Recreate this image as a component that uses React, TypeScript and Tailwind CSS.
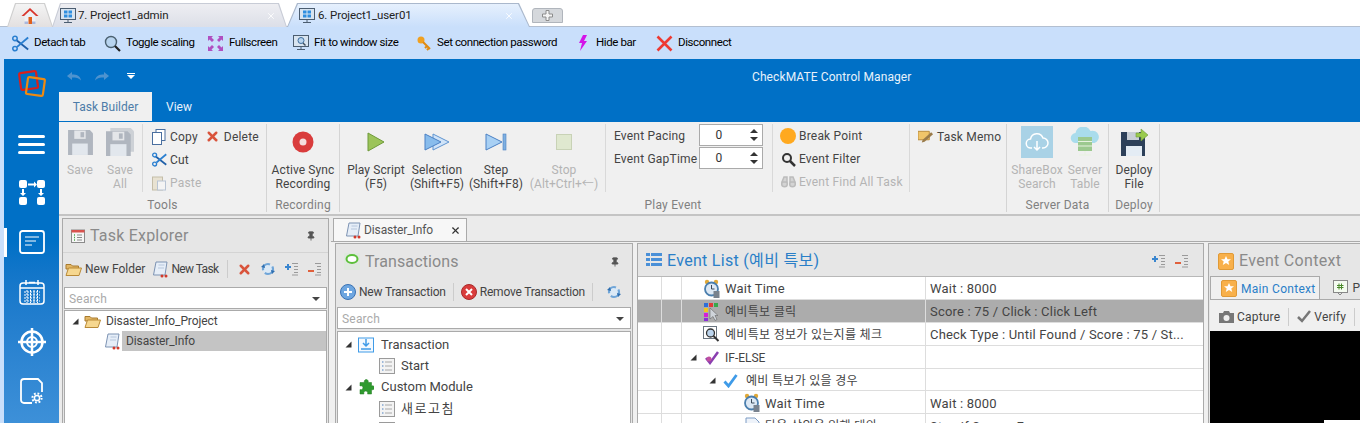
import React from 'react';
import { X, Pin } from 'lucide-react';

const Caret = () => (
  <svg width="7" height="7" viewBox="0 0 7 7" className="shrink-0"><path d="M6.5 0.5V6.5H0.5Z" fill="#333" /></svg>
);

const Scissors = ({ size = 20 }: { size?: number }) => (
  <svg width={size} height={size} viewBox="0 0 20 20" fill="none">
    <path d="M5 6L19 17" stroke="#1f5fa8" strokeWidth="2.200" />
    <path d="M19 3L6 14" stroke="#2a7fd0" strokeWidth="2.200" />
    <circle cx="3.500" cy="4" r="2.600" stroke="#2a7fd0" strokeWidth="1.800" />
    <circle cx="3.500" cy="16" r="2.600" stroke="#2a7fd0" strokeWidth="1.800" />
  </svg>
);

const Monitor = ({ win = false }: { win?: boolean }) => (
  <svg width="16" height="16" viewBox="0 0 16 16" fill="none" className="shrink-0">
    <rect x="0.500" y="0.500" width="15" height="11" fill="#d8e4f0" stroke="#4b5d70" />
    {win ? (
      <g fill="#2f8fe0"><rect x="4" y="2.500" width="3.500" height="3" /><rect x="8.500" y="2.500" width="3.500" height="3" /><rect x="4" y="6.500" width="3.500" height="3" /><rect x="8.500" y="6.500" width="3.500" height="3" /></g>
    ) : (
      <g><circle cx="8" cy="5.500" r="3" fill="#b8d4ef" stroke="#3f6f9f" /><path d="M10 8L12.500 10.500" stroke="#3f4f5f" strokeWidth="1.400" /></g>
    )}
    <path d="M8 12v2M4 14.500h8" stroke="#4b5d70" />
  </svg>
);

const Home = () => (
  <svg width="18" height="18" viewBox="0 0 18 18">
    <path d="M9 1L0.500 9h2.500l6-5.500 6 5.500h2.500Z" fill="#d9342c" />
    <path d="M3.500 9.500L9 5l5.500 4.500V17h-11Z" fill="#eef0f6" />
    <rect x="7.500" y="10" width="3.500" height="7" fill="#e0601c" />
    <rect x="3.500" y="14.500" width="3.500" height="2.500" fill="#a9b7dc" />
    <rect x="11" y="14.500" width="3.500" height="2.500" fill="#a9b7dc" />
  </svg>
);

const Floppy = ({ size = 30, color = '#b0b6bf', light = '#e2e7ed', back = false }: { size?: number; color?: string; light?: string; back?: boolean }) => (
  <svg width={size} height={size} viewBox="0 0 26 26">
    {back && <path d="M4 0h19l3 3v19H4Z" fill="#cdd1d6" />}
    <path d={back ? 'M0 3h20l3 3v20H0Z' : 'M1 1h21l3 3v21H1Z'} fill={color} />
    <rect x={back ? 6 : 7} y={back ? 3.500 : 1.500} width="11" height="8" fill="#e4e6e9" />
    <rect x={back ? 12 : 13} y={back ? 5 : 3} width="3.500" height="5" fill={color} />
    <rect x={back ? 4 : 5} y={back ? 15 : 14} width="15" height="11" fill={light} />
  </svg>
);

const TaskScroll = () => (
  <svg width="17" height="17" viewBox="0 0 17 17" className="shrink-0">
    <path d="M4 1h11l-2 13H1.500Z" fill="#e6eef8" stroke="#7d93b3" />
    <path d="M6.500 4h6M6 7h6" stroke="#b6c6dc" />
    <circle cx="10" cy="15" r="1.500" fill="#d23a2c" /><circle cx="14" cy="15" r="1.500" fill="#d23a2c" />
  </svg>
);

const Folder = () => (
  <svg width="17" height="15" viewBox="0 0 17 15" className="shrink-0">
    <path d="M1 2.500h5l1.500 1.500h6v3H1Z" fill="#e2b665" stroke="#a87b2e" />
    <path d="M1 13.500L3.500 6h13L14 13.500Z" fill="#f6d78f" stroke="#b98a37" />
  </svg>
);

const ListIcon = () => (
  <svg width="16" height="16" viewBox="0 0 16 16" fill="none" className="shrink-0">
    <rect x="0.500" y="0.500" width="15" height="15" fill="#f3f3f3" stroke="#9a9a9a" />
    <path d="M3 4h1.500M3 8h1.500M3 12h1.500" stroke="#4a7fc0" strokeWidth="1.200" />
    <path d="M6 4h7M6 8h7M6 12h7" stroke="#a8a8a8" />
  </svg>
);

const Refresh = () => (
  <svg width="16" height="16" viewBox="0 0 16 16" fill="none">
    <circle cx="8" cy="8" r="5" fill="#dbe9f6" stroke="#6fa5d8" strokeWidth="2.200" strokeDasharray="11 3" />
    <path d="M1 6l3-3 1 4ZM15 10l-3 3-1-4Z" fill="#2f6fb0" />
  </svg>
);

const ExpandIcon = ({ minus = false }: { minus?: boolean }) => (
  <svg width="15" height="14" viewBox="0 0 15 14" fill="none">
    <path d="M8 1.500h6M10 4.500h4M10 7.500h4M10 10.500h4M8 13h6" stroke="#9a9a9a" />
    {minus ? <path d="M1 9h6" stroke="#e0603c" strokeWidth="2" /> : <path d="M1 5h6M4 2v6" stroke="#3a86cf" strokeWidth="2" />}
  </svg>
);

const Alarm = () => (
  <svg width="17" height="20" viewBox="0 0 17 20">
    <circle cx="3" cy="3" r="2.200" fill="#e0a93a" /><circle cx="12" cy="3" r="2.200" fill="#e0a93a" />
    <circle cx="7.500" cy="10" r="6.500" fill="#dce8f4" stroke="#4b7fae" strokeWidth="1.800" />
    <path d="M7.500 6v4h3" stroke="#3a4a5a" fill="none" />
    <rect x="9.500" y="12" width="6" height="7" fill="#78828e" />
  </svg>
);

const ClickIcon = () => (
  <svg width="15" height="20" viewBox="0 0 15 20">
    <rect x="0" y="1" width="4" height="4" fill="#2f6fd8" /><rect x="5" y="1" width="4" height="4" fill="#e03a3a" /><rect x="10" y="1" width="4" height="4" fill="#38a84a" />
    <rect x="0" y="6" width="4" height="4" fill="#f2c51e" /><rect x="0" y="11" width="4" height="4" fill="#d61fd6" /><rect x="0" y="16" width="4" height="3" fill="#8a2fd8" />
    <path d="M6 6v11l3-2.500 2 4 2-1-2-4h3Z" fill="#cfd4da" stroke="#666" strokeWidth="0.600" />
  </svg>
);

const FindIcon = () => (
  <svg width="18" height="18" viewBox="0 0 18 18" fill="none">
    <rect x="0.500" y="0.500" width="13" height="12" fill="#fff" stroke="#6a7580" />
    <circle cx="7.500" cy="7" r="4" fill="#bcd5ee" stroke="#333" strokeWidth="1.300" />
    <path d="M10.500 10l5 5" stroke="#333" strokeWidth="2" />
  </svg>
);

const Star = () => (
  <svg width="16" height="17" viewBox="0 0 16 17" className="shrink-0">
    <rect x="0.500" y="0.500" width="15" height="16" rx="1.500" fill="#f8b04a" stroke="#e09a36" />
    <path d="M8 3l1.500 3.200h3.500l-2.700 2.300.9 3.500L8 10l-3.200 2 .9-3.500L3 6.200h3.500Z" fill="#fff" />
  </svg>
);

const BrowserTab = ({ w, shell, inner, cut, children, className = '' }: { w: string; shell: string; inner: string; cut: string; children: React.ReactNode; className?: string }) => (
  <div className={`${w} h-[24px] pt-px px-px shrink-0 ${shell} ${cut} ${className}`}>
    <div className={`h-full flex items-center relative ${inner} ${cut}`}>{children}</div>
  </div>
);

const ToolbarItem = ({ w, icon, label }: { w: string; icon: React.ReactNode; label: string }) => (
  <div className={`${w} flex items-center gap-[5px] text-[11.5px] tracking-[-0.4px] text-black shrink-0 whitespace-nowrap`}>
    <span className="w-[17px] h-[17px] flex items-center justify-center">{icon}</span>
    {label}
  </div>
);

const RibbonButton = ({ icon, lines, muted = false, w }: { icon: React.ReactNode; lines: string[]; muted?: boolean; w: string }) => (
  <div className={`flex flex-col items-center shrink-0 mt-px ${w} ${muted ? 'text-[#b4b4b4]' : 'text-[#444]'}`}>
    <div className="h-[34px] flex items-center justify-center">{icon}</div>
    <div className="mt-[4px] text-[12px] leading-[14px] text-center whitespace-nowrap tracking-[0.1px]">
      {lines.map((l) => <div key={l}>{l}</div>)}
    </div>
  </div>
);

const SmallAction = ({ icon, label, muted = false }: { icon: React.ReactNode; label: string; muted?: boolean }) => (
  <div className={`h-[23px] pt-[2px] flex items-center gap-[3px] text-[12px] tracking-[0.2px] whitespace-nowrap ${muted ? 'text-[#b4b4b4]' : 'text-[#444]'}`}>
    <span className="w-[16px] flex justify-center">{icon}</span>
    {label}
  </div>
);

const Group = ({ title, w, children }: { title: string; w: string; children: React.ReactNode }) => (
  <div className={`${w} shrink-0 h-full border-r border-[#d4d4d4] flex flex-col`}>
    <div className="h-[72px] flex overflow-hidden">{children}</div>
    <div className="h-[16px] text-center text-[12px] leading-[18px] text-[#808080] tracking-[0.2px]">{title}</div>
  </div>
);

const Spinner = () => (
  <div className="w-[64px] h-[22px] border border-[#aaa] bg-white flex items-center">
    <div className="flex-1 text-center text-[12px] pr-[8px] text-[#333]">0</div>
    <div className="w-[16px] flex flex-col items-center gap-[4px]">
      <span className="w-0 h-0 border-x-[4px] border-x-transparent border-b-[4px] border-b-[#333]" />
      <span className="w-0 h-0 border-x-[4px] border-x-transparent border-t-[4px] border-t-[#333]" />
    </div>
  </div>
);

const SearchBox = () => (
  <div className="h-[22px] bg-white border border-[#aaa] flex items-center px-[4px] pt-px text-[12px] text-[#aaa] tracking-[0.2px]">
    <span className="flex-1">Search</span>
    <span className="w-0 h-0 border-x-[4px] border-x-transparent border-t-[4px] border-t-[#444] mr-[2px]" />
  </div>
);

const PanelPin = () => <Pin size={10} className="text-[#555] fill-[#555]" />;

const rows: { cell: string; icon: React.ReactNode; name: string; value: string; selected?: boolean }[] = [
  { cell: 'pl-[22px] gap-[4px] text-[13px] tracking-[0.2px]', icon: <Alarm />, name: 'Wait Time', value: 'Wait : 8000' },
  { cell: 'pl-[22px] gap-[4px] text-[12px] tracking-[0.3px]', icon: <span className="w-[17px] flex"><ClickIcon /></span>, name: '예비특보 클릭', value: 'Score : 75 / Click : Click Left', selected: true },
  { cell: 'pl-[21px] gap-[4px] text-[12px] tracking-[0.3px]', icon: <FindIcon />, name: '예비특보 정보가 있는지를 체크', value: 'Check Type : Until Found / Score : 75 / St...' },
  {
    cell: 'pl-[8px] gap-[6px] text-[12px]',
    icon: (
      <span className="flex items-center gap-[8px]">
        <Caret />
        <svg width="14" height="14" viewBox="0 0 14 14" fill="none"><path d="M1 7l4 5 8-11" stroke="#8a3fb0" strokeWidth="2.500" /><circle cx="4" cy="8" r="2.500" fill="#c04fa0" /></svg>
      </span>
    ),
    name: 'IF-ELSE',
    value: '',
  },
  {
    cell: 'pl-[27px] gap-[8px] text-[12px] tracking-[0.3px]',
    icon: (
      <span className="flex items-center gap-[7px]">
        <Caret />
        <svg width="15" height="14" viewBox="0 0 15 14" fill="none"><path d="M1.500 7.500l4 4.500 8-11" stroke="#3f9be8" strokeWidth="2.800" /></svg>
      </span>
    ),
    name: '예비 특보가 있을 경우',
    value: '',
  },
  { cell: 'pl-[62px] gap-[4px] text-[13px] tracking-[0.2px]', icon: <Alarm />, name: 'Wait Time', value: 'Wait : 8000' },
  {
    cell: 'pl-[63px] gap-[5px] text-[12px] tracking-[0.3px]',
    icon: <svg width="15" height="18" viewBox="0 0 15 18"><path d="M1 1h9l4 4v12H1Z" fill="#eef3fa" stroke="#7d9cc4" /></svg>,
    name: '다음 상외용 입해 대의',
    value: 'Stop if Score : F',
  },
];

export default function App() {
  return (
    <div className="w-[1360px] h-[423px] overflow-hidden bg-white flex flex-col font-['Roboto','Noto_Sans_CJK_KR',sans-serif]">
      {/* browser tabs */}
      <div className="h-[27px] shrink-0 flex items-end pl-[7px] bg-white relative">
        <span className="absolute left-0 right-0 bottom-0 h-px bg-[#b3bfd0]" />
        <BrowserTab
          w="w-[46px]"
          shell="bg-[#cfcfcf]"
          inner="bg-gradient-to-b from-[#f4f4f4] to-[#e3e0e0] justify-center"
          cut="[clip-path:polygon(0_100%,8px_0,calc(100%-8px)_0,100%_100%)]"
        >
          <Home />
        </BrowserTab>
        <BrowserTab
          w="w-[235px]"
          shell="bg-[#c8ccd6]"
          inner="bg-gradient-to-b from-[#eeeef2] to-[#dcdfe8] pl-[7px] gap-[2px] text-[11.5px] tracking-[-0.1px] text-[#222]"
          cut="[clip-path:polygon(0_100%,8px_0,calc(100%-8px)_0,100%_100%)]"
          className="-ml-px"
        >
          <Monitor win />
          7. Project1_admin
          <X size={10} className="absolute right-[10px] top-[7px] text-white" />
        </BrowserTab>
        <BrowserTab
          w="w-[243px]"
          shell="bg-[#aab8cc] relative z-10"
          inner="bg-gradient-to-b from-[#e6f0fd] to-[#c9dffb] pl-[11px] gap-[3px] text-[11.5px] tracking-[-0.1px] text-[#222]"
          cut="[clip-path:polygon(0_100%,10px_0,calc(100%-11px)_0,100%_100%)]"
        >
          <Monitor win />
          6. Project1_user01
          <X size={10} className="absolute right-[15px] top-[7px] text-white" />
        </BrowserTab>
        <div className="ml-[2px] mb-[4px] w-[31px] h-[15px] rounded-t-[3px] bg-[#d5d8dc] border border-[#b0b5bc] flex items-center justify-center">
          <svg width="11" height="11" viewBox="0 0 11 11"><path d="M4 0.500h3v3.500h3.500v3H7v3.500H4V7H0.500V4H4Z" fill="#f4f4f4" stroke="#8c8c8c" /></svg>
        </div>
      </div>

      {/* connection toolbar */}
      <div className="h-[32px] shrink-0 bg-[#c9dffb] flex items-center pl-[12px]">
        <ToolbarItem w="w-[92px]" icon={<Scissors size={17} />} label="Detach tab" />
        <ToolbarItem
          w="w-[103px]"
          icon={<svg width="17" height="17" viewBox="0 0 17 17" fill="none"><circle cx="7" cy="7" r="5.500" fill="#b8d4ef" stroke="#4a6070" strokeWidth="1.400" /><path d="M11 11l5 5" stroke="#222" strokeWidth="2.200" /></svg>}
          label="Toggle scaling"
        />
        <ToolbarItem
          w="w-[85px]"
          icon={<svg width="15" height="15" viewBox="0 0 15 15" fill="#b04fc0"><path d="M0 0h5L3.500 1.500 6 4 4 6 1.500 3.500 0 5ZM15 0v5l-1.500-1.500L11 6 9 4l2.500-2.500L10 0ZM0 15v-5l1.500 1.500L4 9l2 2-2.500 2.500L5 15ZM15 15h-5l1.500-1.500L9 11l2-2 2.500 2.500L15 10Z" /></svg>}
          label="Fullscreen"
        />
        <ToolbarItem w="w-[123px]" icon={<Monitor />} label="Fit to window size" />
        <ToolbarItem
          w="w-[159px]"
          icon={<svg width="16" height="16" viewBox="0 0 16 16" fill="none"><circle cx="5" cy="5" r="3.500" fill="#f0a020" /><path d="M7 7l7 7M11 11l-2 2M13 13l-2 2" stroke="#e08a10" strokeWidth="2" /></svg>}
          label="Set connection password"
        />
        <ToolbarItem
          w="w-[82px]"
          icon={<svg width="10" height="16" viewBox="0 0 10 16"><path d="M5 0h4L6 6h3L2 16l2-8H1Z" fill="#d414e8" /></svg>}
          label="Hide bar"
        />
        <ToolbarItem
          w="w-[90px]"
          icon={<svg width="17" height="17" viewBox="0 0 17 17"><path d="M1.500 1.500l14 14M15.500 1.500l-14 14" stroke="#ee3a32" strokeWidth="2.600" /></svg>}
          label="Disconnect"
        />
      </div>

      <div className="flex-1 flex min-h-0 bg-[#c9dffb] pl-[4px]">
        {/* left rail */}
        <div className="w-[55px] shrink-0 bg-gradient-to-b from-[#0070c6] from-50% to-[#3d90d8] flex flex-col items-center">
          <svg width="30" height="30" viewBox="0 0 30 30" fill="none" className="mt-[10px]">
            <rect x="3" y="3" width="17" height="17" rx="1.500" stroke="#d8201c" strokeWidth="2.200" transform="rotate(-8 12 11)" />
            <rect x="10" y="9" width="17" height="17" rx="1.500" stroke="#ee8a10" strokeWidth="2.200" transform="rotate(8 18 17)" />
          </svg>
          <div className="mt-[36px] flex flex-col gap-[5px] w-[27px]">
            <span className="h-[3px] rounded bg-white" /><span className="h-[3px] rounded bg-white" /><span className="h-[3px] rounded bg-white" />
          </div>
          <svg width="28" height="26" viewBox="0 0 28 26" className="mt-[26px]" fill="white">
            <rect x="1" y="0" width="8" height="8" rx="2" /><rect x="19" y="0" width="8" height="8" rx="2" /><rect x="1" y="17" width="8" height="8" rx="2" /><rect x="19" y="17" width="8" height="8" rx="2" />
            <path d="M10 3.500h6V1.500l3 3-3 3V5.500h-6ZM4 9h2v4h2l-3 3-3-3h2ZM22 9h2v4h2l-3 3-3-3h2Z" />
          </svg>
          <div className="mt-[24px] w-full flex justify-center relative">
            <span className="absolute left-0 -top-[2px] w-[3px] h-[29px] bg-white" />
            <svg width="26" height="24" viewBox="0 0 26 24" fill="none">
              <rect x="1" y="1" width="24" height="22" rx="2.500" stroke="white" strokeWidth="1.800" />
              <path d="M6 7h14M6 11h11M6 15h7" stroke="white" />
            </svg>
          </div>
          <svg width="26" height="25" viewBox="0 0 26 25" fill="none" className="mt-[26px]" stroke="white">
            <rect x="1" y="3" width="24" height="21" rx="3" strokeWidth="1.500" />
            <path d="M1 8h24M7 0v5M19 0v5M10 2.500h6" strokeWidth="1.500" />
            <path d="M5 12h16M5 15h16M5 18h16M5 21h16M8 10v13M11.500 10v13M15 10v13M18.500 10v13" strokeWidth="1" strokeDasharray="2 1" />
          </svg>
          <svg width="28" height="28" viewBox="0 0 28 28" fill="none" className="mt-[23px]" stroke="white">
            <circle cx="14" cy="14" r="10.500" strokeWidth="2.500" />
            <circle cx="14" cy="14" r="5" strokeWidth="2" />
            <path d="M14 0v28M0 14h28" strokeWidth="2.500" />
          </svg>
          <svg width="24" height="26" viewBox="0 0 24 26" fill="none" className="mt-[22px]" stroke="white" strokeWidth="1.800">
            <path d="M12 25H4a3 3 0 0 1-3-3V4a3 3 0 0 1 3-3h14l4 4v9" />
            <circle cx="17" cy="20" r="2.600" strokeWidth="1.500" />
            <circle cx="17" cy="20" r="4.600" strokeWidth="2" strokeDasharray="1.800 1.800" />
          </svg>
        </div>

        <div className="flex-1 min-w-0 flex flex-col">
          {/* title + quick access */}
          <div className="h-[62px] shrink-0 bg-[#0070c6] flex flex-col">
            <div className="h-[33px] relative flex items-center pl-[8px] gap-[14px]">
              <svg width="14" height="10" viewBox="0 0 14 10"><path d="M0 5l5-4v2.500c5 0 8 1 9 6-2-2.500-5-3-9-3V9Z" fill="#4e93cf" /></svg>
              <svg width="14" height="10" viewBox="0 0 14 10"><path d="M14 5L9 1v2.500c-5 0-8 1-9 6 2-2.500 5-3 9-3V9Z" fill="#4e93cf" /></svg>
              <span className="ml-[4px] flex flex-col items-center gap-[1px]">
                <span className="w-[8px] h-[1px] bg-white" />
                <span className="w-0 h-0 border-x-[4px] border-x-transparent border-t-[4px] border-t-white" />
              </span>
              <div className="absolute top-[9px] left-[693px] text-[12px] text-[#e8f2fb] tracking-[0.1px]">CheckMATE Control Manager</div>
            </div>
            <div className="h-[29px] flex items-stretch">
              <div className="w-[93px] bg-[#f0f0f0] flex items-center justify-center text-[12px] text-[#4d7ca8]">Task Builder</div>
              <div className="w-[54px] flex items-center justify-center text-[12px] text-[#e8f2fb]">View</div>
            </div>
          </div>

          {/* ribbon */}
          <div className="h-[95px] shrink-0 bg-[#f0f0f0] border-t border-[#0070c6] flex pt-[2px] pb-[2px] border-b-2 border-b-[#c4c4c4]">
            <Group title="Tools" w="w-[208px]">
              <div className="flex w-[84px] h-[68px] border-r border-[#d9d9d9] shrink-0">
                <RibbonButton w="w-[42px]" muted icon={<Floppy size={27} />} lines={['Save']} />
                <RibbonButton w="w-[38px]" muted icon={<Floppy size={28} back />} lines={['Save', 'All']} />
              </div>
              <div className="flex flex-col ml-[8px]">
                <div className="flex gap-[7px]">
                  <SmallAction
                    icon={<svg width="14" height="16" viewBox="0 0 14 16" fill="#fff" stroke="#4a6f9f"><rect x="4" y="0.500" width="9" height="11" /><rect x="0.500" y="3.500" width="9" height="12" /></svg>}
                    label="Copy"
                  />
                  <SmallAction icon={<X size={15} strokeWidth={4} className="text-[#d9543c]" />} label="Delete" />
                </div>
                <SmallAction icon={<Scissors size={15} />} label="Cut" />
                <SmallAction
                  muted
                  icon={<svg width="14" height="16" viewBox="0 0 14 16" fill="#e8e2d2" stroke="#c4bda8"><rect x="0.500" y="2" width="10" height="13" /><rect x="5.500" y="6" width="8" height="9" fill="#f4f4f4" stroke="#b8c4d4" /></svg>}
                  label="Paste"
                />
              </div>
            </Group>
            <Group title="Recording" w="w-[73px]">
              <RibbonButton
                w="w-full"
                icon={<svg width="22" height="22" viewBox="0 0 22 22"><circle cx="11" cy="11" r="10.500" fill="#d93c3c" /><circle cx="11" cy="11" r="3.500" fill="#f4dede" /></svg>}
                lines={['Active Sync', 'Recording']}
              />
            </Group>
            <Group title="Play Event" w="w-[667px]">
              <div className="flex w-[266px] shrink-0 border-r border-[#d9d9d9] h-[68px] pl-[4px]">
                <RibbonButton w="w-[64px]" icon={<svg width="18" height="20" viewBox="0 0 18 20"><path d="M1 1l16 9-16 9Z" fill="#9cc45a" stroke="#6f9a3a" /></svg>} lines={['Play Script', '(F5)']} />
                <RibbonButton w="w-[58px]" icon={<svg width="26" height="18" viewBox="0 0 26 18"><path d="M9 1l16 8-16 8Z" fill="#cfe3f8" stroke="#5f94d0" /><path d="M1 1l16 8-16 8Z" fill="#88bcec" stroke="#4a80c4" /></svg>} lines={['Selection', '(Shift+F5)']} />
                <RibbonButton w="w-[60px]" icon={<svg width="22" height="18" viewBox="0 0 22 18"><path d="M1 1l16 8-16 8Z" fill="#a8d0f4" stroke="#4a80c4" /><rect x="18" y="1" width="3" height="16" fill="#7fb0e0" stroke="#4a80c4" strokeWidth="0.600" /></svg>} lines={['Step', '(Shift+F8)']} />
                <RibbonButton w="w-[76px]" muted icon={<span className="w-[16px] h-[16px] bg-[#dfe8cf] border border-[#c8d2b6]" />} lines={['Stop', '(Alt+Ctrl+←)']} />
              </div>
              <div className="w-[167px] shrink-0 border-r border-[#d9d9d9] h-[68px] pl-[8px] flex flex-col gap-[1px] tracking-[0.2px]">
                <div className="flex items-center h-[22px] text-[12px] text-[#444]"><span className="w-[85px] pt-[2px]">Event Pacing</span><Spinner /></div>
                <div className="flex items-center h-[22px] text-[12px] text-[#444]"><span className="w-[85px] pt-[2px]">Event GapTime</span><Spinner /></div>
              </div>
              <div className="w-[137px] shrink-0 border-r border-[#d9d9d9] h-[68px] pl-[7px] flex flex-col">
                <SmallAction icon={<span className="block w-[16px] h-[16px] rounded-full bg-[#ffa91f]" />} label="Break Point" />
                <SmallAction icon={<svg width="15" height="15" viewBox="0 0 15 15" fill="none"><circle cx="6" cy="6" r="4" stroke="#333" strokeWidth="2" /><path d="M9 9l5 5" stroke="#333" strokeWidth="2.500" /></svg>} label="Event Filter" />
                <SmallAction muted icon={<svg width="15" height="13" viewBox="0 0 15 13" fill="#d4d4d4" stroke="#bcbcbc" strokeWidth="1.500"><circle cx="3.500" cy="9" r="2.800" /><circle cx="11.500" cy="9" r="2.800" /><path d="M3 2h3v5H1ZM12 2H9v5h5Z" /></svg>} label="Event Find All Task" />
              </div>
              <div className="flex-1 pl-[8px]">
                <SmallAction
                  icon={<svg width="17" height="13" viewBox="0 0 17 13"><path d="M0 1h12v9H0Z" fill="#f0c56a" stroke="#b98a37" /><path d="M5 10l9-8 2 2-9 8-3 1Z" fill="#9a7b4a" /></svg>}
                  label="Task Memo"
                />
              </div>
            </Group>
            <Group title="Server Data" w="w-[102px]">
              <RibbonButton
                w="w-[60px]"
                muted
                icon={<span className="w-[32px] h-[32px] bg-[#a9d2e6] flex items-center justify-center"><svg width="24" height="20" viewBox="0 0 24 20" fill="none" stroke="white" strokeWidth="1.500"><path d="M7 16H6a4.500 4.500 0 0 1-.5-9 6.500 6.500 0 0 1 12.500-1 5 5 0 0 1 0 10h-1M12 9v9M9 15l3 3 3-3" /></svg></span>}
                lines={['ShareBox', 'Search']}
              />
              <RibbonButton
                w="w-[36px]"
                muted
                icon={<svg width="30" height="30" viewBox="0 0 30 30"><path d="M6 16a5 5 0 0 1-.5-10 8 8 0 0 1 15-2 6 6 0 0 1 4 12Z" fill="#a9dcec" /><rect x="8" y="10" width="14" height="14" fill="#9cc98f" /><path d="M8 14.500h14M8 19h14M15 24v4M9 28h12" stroke="#e8f2e0" /></svg>}
                lines={['Server', 'Table']}
              />
            </Group>
            <Group title="Deploy" w="w-[51px]">
              <RibbonButton
                w="w-full"
                icon={<svg width="30" height="30" viewBox="0 0 30 30"><path d="M2 5h21l3 3v21H2Z" fill="#2d4059" /><rect x="8" y="5" width="12" height="8" fill="#c8ced6" /><rect x="7" y="19" width="16" height="10" fill="#e4ecf4" /><path d="M17 6h5V2l7 6-7 6v-4h-5Z" fill="#9acb4e" stroke="#6f9a3a" strokeWidth="0.600" /></svg>}
                lines={['Deploy', 'File']}
              />
            </Group>
          </div>

          {/* work area */}
          <div className="flex-1 min-h-0 bg-[#ebebeb] flex pl-[3px] pt-[2px]">
            {/* task explorer */}
            <div className="w-[267px] shrink-0 flex flex-col border border-[#aaa] border-b-0 bg-[#e6e6e6]">
              <div className="h-[34px] shrink-0 flex items-center pl-[8px] pr-[12px] text-[#8a8a8a] text-[16px] gap-[5px] border-b border-[#d4d4d4]">
                <svg width="14" height="14" viewBox="0 0 14 14" fill="none"><rect x="0.500" y="1" width="13" height="12.500" fill="#f6f6f6" stroke="#8a8a8a" /><path d="M0.500 1h13v2.500H0.500Z" fill="#d9534f" /><path d="M3 6h1M3 8.500h1M3 11h1" stroke="#4aa84a" strokeWidth="1.500" /><path d="M6 6h5M6 8.500h5M6 11h5" stroke="#8a8a8a" /></svg>
                <span className="flex-1 tracking-[0.2px]">Task Explorer</span>
                <PanelPin />
              </div>
              <div className="h-[34px] shrink-0 pb-[2px] flex items-center pl-[2px] text-[12px] text-[#444] whitespace-nowrap">
                <span className="flex items-center gap-[3px]"><Folder />New Folder</span>
                <span className="flex items-center gap-[2px] ml-[7px] tracking-[-0.6px]"><TaskScroll />New Task</span>
                <span className="w-px h-[18px] bg-[#ccc] ml-[8px]" />
                <span className="ml-[9px] flex items-center gap-[8px]">
                  <X size={15} strokeWidth={4} className="text-[#d9543c]" />
                  <Refresh />
                  <ExpandIcon />
                  <ExpandIcon minus />
                </span>
              </div>
              <div className="px-[1px] shrink-0"><SearchBox /></div>
              <div className="flex-1 bg-white mt-[1px] mx-[1px] border border-[#aaa] border-b-0 text-[12px] text-[#444] tracking-[-0.1px]">
                <div className="h-[20px] flex items-center pl-[7px] gap-[5px]"><Caret /><Folder />Disaster_Info_Project</div>
                <div className="h-[20px] flex items-center pl-[39px]">
                  <TaskScroll />
                  <span className="ml-[1px] flex-1 h-full bg-[#c4c4c4] flex items-center pl-[4px]">Disaster_Info</span>
                </div>
              </div>
            </div>

            <div className="flex-1 min-w-0 flex flex-col pl-[2px]">
              <div className="h-[24px] shrink-0 border-b border-[#aaa] flex items-end">
                <div className="ml-[2px] w-[134px] h-[23px] bg-[#f7f7f7] border border-b-0 border-[#aaa] flex items-center pl-[11px] gap-[2px] text-[12px] text-[#555] tracking-[-0.1px]">
                  <TaskScroll />
                  <span className="flex-1">Disaster_Info</span>
                  <X size={11} strokeWidth={2.500} className="text-[#333] mr-[5px]" />
                </div>
              </div>
              <div className="flex-1 min-h-0 flex pl-[6px] pt-[1px] gap-[4px] overflow-hidden -ml-[2px] bg-[#f0f0f0]">
                {/* transactions */}
                <div className="w-[298px] shrink-0 flex flex-col border border-[#aaa] border-b-0 bg-[#e6e6e6]">
                  <div className="h-[34px] shrink-0 pt-px flex items-center pl-[8px] pr-[12px] text-[16px] text-[#8a8a8a] gap-[5px]">
                    <svg width="16" height="17" viewBox="0 0 16 17"><rect width="16" height="17" rx="1" fill="#dfe8df" /><ellipse cx="8" cy="6" rx="6.500" ry="5" fill="#5bbf3a" /><ellipse cx="8" cy="6" rx="4.500" ry="3" fill="#fff" /></svg>
                    <span className="flex-1 tracking-[0.1px]">Transactions</span>
                    <PanelPin />
                  </div>
                  <div className="h-[28px] shrink-0 flex items-center pl-[4px] text-[12px] text-[#444] whitespace-nowrap tracking-[-0.2px]">
                    <span className="flex items-center gap-[3px]">
                      <svg width="16" height="16" viewBox="0 0 16 16"><circle cx="8" cy="8" r="7.500" fill="#6ea6e0" stroke="#3a72b4" /><path d="M8 4v8M4 8h8" stroke="#fff" strokeWidth="2" /></svg>
                      New Transaction
                    </span>
                    <span className="w-px h-[18px] bg-[#ccc] mx-[7px]" />
                    <span className="flex items-center gap-[3px]">
                      <svg width="16" height="16" viewBox="0 0 16 16"><circle cx="8" cy="8" r="7.500" fill="#d93c3c" stroke="#a82a2a" /><path d="M5 5l6 6M11 5l-6 6" stroke="#fff" strokeWidth="2" /></svg>
                      Remove Transaction
                    </span>
                    <span className="w-px h-[18px] bg-[#ccc] mx-[7px]" />
                    <span className="ml-[6px]"><Refresh /></span>
                  </div>
                  <div className="px-[1px] mt-px shrink-0"><SearchBox /></div>
                  <div className="flex-1 bg-white mt-[2px] mx-[1px] pt-[2px] border border-[#aaa] border-b-0 text-[13px] text-[#444]">
                    <div className="h-[21px] flex items-center pl-[7px] gap-[6px]">
                      <Caret />
                      <svg width="16" height="16" viewBox="0 0 16 16" fill="none" stroke="#3f9be8"><rect x="0.500" y="1" width="15" height="14" fill="#f4f9fe" /><path d="M8 2v7M5 6l3 3 3-3M3 12h10" strokeWidth="1.500" /></svg>
                      <span className="ml-px">Transaction</span>
                    </div>
                    <div className="h-[21px] flex items-center pl-[41px] gap-[6px]"><ListIcon />Start</div>
                    <div className="h-[22px] flex items-center pl-[7px] gap-[6px]">
                      <Caret />
                      <svg width="16" height="16" viewBox="0 0 16 16"><path d="M4 3.500h2.500a2 2 0 1 1 3.500 0h3.500V7a2 2 0 1 1 0 3.500V15H9.500a2 2 0 1 0-3.500 0H2v-4.500A2 2 0 1 0 2 7V3.500Z" fill="#2f9a2f" stroke="#1f7a1f" strokeWidth="0.500" /></svg>
                      <span className="ml-px">Custom Module</span>
                    </div>
                    <div className="h-[21px] flex items-center pl-[41px] gap-[6px] tracking-[1.500px]"><ListIcon />새로고침</div>
                    <div className="h-[21px] flex items-center pl-[41px] gap-[6px]"><ListIcon /></div>
                  </div>
                </div>

                {/* event list */}
                <div className="w-[567px] shrink-0 flex flex-col border border-[#aaa] border-b-0 bg-[#e6e6e6]">
                  <div className="h-[33px] shrink-0 pt-px flex items-center pl-[8px] pr-[14px] gap-[5px] text-[16px] text-[#2a7fc8] border-b border-[#b8b8b8]">
                    <svg width="16" height="15" viewBox="0 0 16 15" fill="#4a90d8"><path d="M0 0h4v3H0ZM5 0h11v3H5ZM0 5h4v3H0ZM5 5h11v3H5ZM0 10h4v3H0ZM5 10h11v3H5Z" /></svg>
                    <span className="flex-1 tracking-[0.3px]">Event List (예비 특보)</span>
                    <span className="flex gap-[8px]"><ExpandIcon /><ExpandIcon minus /></span>
                  </div>
                  <div className="flex-1 bg-white text-[#444]">
                    {rows.map((r, i) => (
                      <div key={i} className={`h-[22.9px] flex border-b border-[#ddd] ${r.selected ? 'bg-[#acacac]' : ''}`}>
                        <div className="w-[24px] border-r border-[#ddd]" />
                        <div className="w-[20px] border-r border-[#ddd]" />
                        <div className={`w-[244px] pt-[2px] border-r border-[#ddd] flex items-center whitespace-nowrap overflow-hidden ${r.cell}`}>
                          <span className="shrink-0 flex items-center">{r.icon}</span>
                          {r.name}
                        </div>
                        <div className="flex-1 pt-[2px] flex items-center pl-[4px] text-[13px] whitespace-nowrap overflow-hidden tracking-[0.2px]">{r.value}</div>
                      </div>
                    ))}
                  </div>
                </div>

                {/* event context */}
                <div className="flex-1 min-w-0 flex flex-col border-l border-t border-[#aaa] bg-[#e6e6e6] pl-px">
                  <div className="h-[32px] shrink-0 pt-[2px] flex items-center pl-[8px] gap-[5px] text-[16px] text-[#8a8a8a] tracking-[0.3px]"><Star />Event Context</div>
                  <div className="h-[24px] shrink-0 flex border-b border-[#aaa]">
                    <div className="w-[115px] pt-px bg-[#f0f0f0] border border-b-0 border-[#aaa] flex items-center pl-[10px] gap-[4px] text-[12px] text-[#2a7fc8] tracking-[0.3px]"><Star />Main Context</div>
                    <div className="pl-[13px] flex items-center gap-[4px] text-[12px] text-[#444]">
                      <svg width="15" height="16" viewBox="0 0 15 16" fill="none"><rect x="0.500" y="0.500" width="14" height="12" fill="#f4fbf0" stroke="#888" /><path d="M5 13l2 2 2-2" stroke="#888" /><path d="M6 3.500v6M8.500 3.500v6M4 5.500h6.500M4 7.500h6.500" stroke="#4a8a2a" /></svg>
                      P
                    </div>
                  </div>
                  <div className="h-[31px] shrink-0 pt-[2px] bg-[#f0f0f0] flex items-center pl-[9px] text-[12px] text-[#444] whitespace-nowrap tracking-[0.2px]">
                    <span className="flex items-center gap-[3px]">
                      <svg width="15" height="14" viewBox="0 0 15 14"><path d="M0 3h4l1-2h5l1 2h4v10H0Z" fill="#777" /><circle cx="7.500" cy="8" r="3" fill="#f0f0f0" /></svg>
                      Capture
                    </span>
                    <span className="w-px h-[18px] bg-[#ccc] mx-[8px]" />
                    <span className="flex items-center gap-[3px]">
                      <svg width="14" height="13" viewBox="0 0 14 13" fill="none"><path d="M1 7l4 4 8-10" stroke="#777" strokeWidth="2.500" /></svg>
                      Verify
                    </span>
                    <span className="w-px h-[18px] bg-[#ccc] ml-[8px]" />
                  </div>
                  <div className="flex-1 bg-black relative">
                    <span className="absolute left-[114px] right-0 bottom-0 h-[3px] bg-white" />
                  </div>
                </div>
              </div>
            </div>
          </div>
        </div>
      </div>
    </div>
  );
}
